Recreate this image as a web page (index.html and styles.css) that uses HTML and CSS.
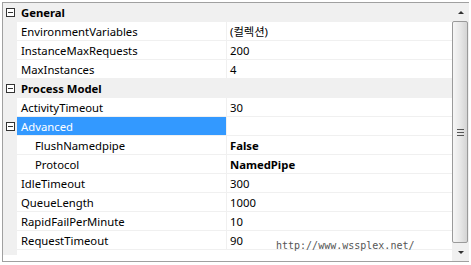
FILE: index.html
```html
<!DOCTYPE html>
<html lang="ko">
<head>
    <meta charset="UTF-8">
    <title>Properties</title>
    <link rel="stylesheet" href="styles.css">
</head>
<body>
    <div class="frame">
        <div class="grid">
            <div class="row cat"><span class="gut"><i class="box"></i></span><span class="name">General</span></div>
            <div class="row"><span class="gut"></span><span class="name">EnvironmentVariables</span><span class="val">(컬렉션)</span></div>
            <div class="row"><span class="gut"></span><span class="name">InstanceMaxRequests</span><span class="val">200</span></div>
            <div class="row"><span class="gut"></span><span class="name">MaxInstances</span><span class="val">4</span></div>
            <div class="row cat"><span class="gut"><i class="box"></i></span><span class="name">Process Model</span></div>
            <div class="row"><span class="gut"></span><span class="name">ActivityTimeout</span><span class="val">30</span></div>
            <div class="row sel"><span class="gut"><i class="box"></i></span><span class="name">Advanced</span><span class="val"></span></div>
            <div class="row"><span class="gut"></span><span class="name sub">FlushNamedpipe</span><span class="val b">False</span></div>
            <div class="row"><span class="gut"></span><span class="name sub">Protocol</span><span class="val b">NamedPipe</span></div>
            <div class="row"><span class="gut"></span><span class="name">IdleTimeout</span><span class="val">300</span></div>
            <div class="row"><span class="gut"></span><span class="name">QueueLength</span><span class="val">1000</span></div>
            <div class="row"><span class="gut"></span><span class="name">RapidFailPerMinute</span><span class="val">10</span></div>
            <div class="row"><span class="gut"></span><span class="name">RequestTimeout</span><span class="val">90</span></div>
            <div class="rest"><span class="gut"></span></div>
            <div class="mark">http://www.wssplex.net/</div>
        </div>
        <div class="scroll">
            <div class="btn"><i class="up"></i></div>
            <div class="thumb"><i class="grip"></i></div>
            <div class="btn"><i class="down"></i></div>
        </div>
    </div>
</body>
</html>
```

FILE: styles.css
```css
body {
    margin: 0;
    padding: 2px 0 0 2px;
    background-color: white;
    font-family: "Noto Sans", "Noto Sans CJK KR", sans-serif;
    font-size: 11.3px;
    color: black;
}
.frame {
    display: flex;
    width: 467px;
    height: 260px;
    box-sizing: border-box;
    border: 1px solid #a0a0a0;
    border-right: none;
}
.grid {
    flex: 1;
    display: flex;
    flex-direction: column;
    position: relative;
}
.row {
    display: flex;
    height: 19px;
    line-height: 19px;
}
.gut {
    width: 14px;
    flex: none;
    background-color: #f0f0f0;
    display: flex;
    justify-content: center;
    align-items: center;
}
.name {
    width: 210px;
    flex: none;
    padding-left: 4px;
    box-sizing: border-box;
    border-bottom: 1px solid #f0f0f0;
    border-right: 1px solid #f0f0f0;
    white-space: nowrap;
}
.name.sub {
    padding-left: 18px;
}
.val {
    flex: 1;
    padding-left: 3px;
    border-bottom: 1px solid #f0f0f0;
    white-space: nowrap;
}
.b {
    font-weight: bold;
}
.cat {
    background-color: #f0f0f0;
    font-weight: bold;
}
.cat .name {
    border: none;
}
.sel .name {
    background-color: #3399ff;
    color: white;
}
.box {
    display: block;
    width: 9px;
    height: 9px;
    box-sizing: border-box;
    border: 1px solid #333;
    background: linear-gradient(#333, #333) center / 5px 1px no-repeat, white;
}
.rest {
    flex: 1;
    display: flex;
}
.rest .gut {
    height: 5px;
}
.mark {
    position: absolute;
    left: 273px;
    top: 237px;
    font-family: "DejaVu Sans Mono", monospace;
    font-size: 10px;
    color: #555;
}
.scroll {
    width: 17px;
    flex: none;
    display: flex;
    flex-direction: column;
    background-color: #f0f0f0;
}
.btn {
    height: 18px;
    display: flex;
    justify-content: center;
    align-items: center;
}
.up, .down {
    width: 0;
    height: 0;
    border-left: 3px solid transparent;
    border-right: 3px solid transparent;
}
.up {
    border-bottom: 3px solid #333;
}
.down {
    border-top: 3px solid #333;
}
.thumb {
    flex: 1;
    margin: 0 1px 0 0;
    border: 1px solid #9a9a9a;
    border-radius: 2px;
    background: linear-gradient(to right, #f6f6f6, #e8e8e8 50%, #d4d4d4);
    display: flex;
    justify-content: center;
    align-items: center;
}
.grip {
    display: block;
    width: 7px;
    height: 7px;
    background: repeating-linear-gradient(#555 0 1px, transparent 1px 3px);
}
```
